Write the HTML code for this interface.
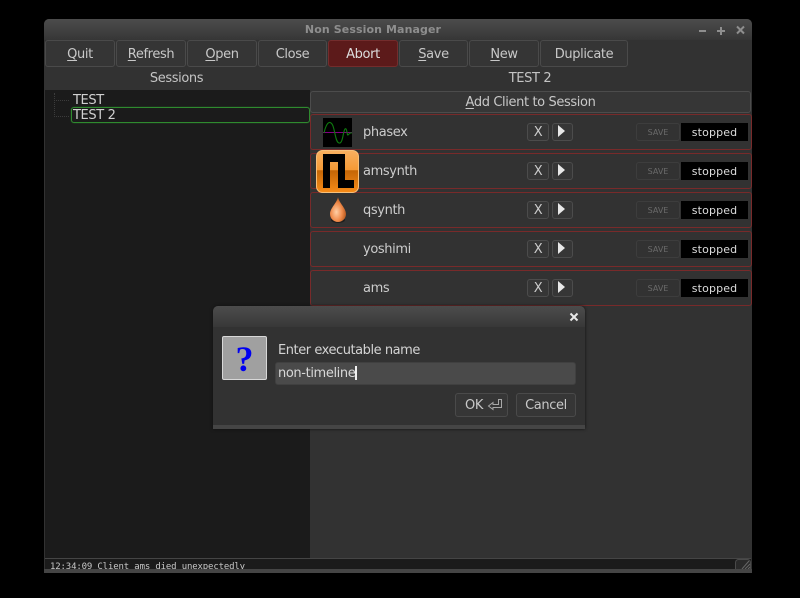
<!DOCTYPE html>
<html><head><meta charset="utf-8">
<style>
html,body{margin:0;padding:0;background:#000;width:800px;height:598px;overflow:hidden}
*{box-sizing:border-box}
body{font-family:"DejaVu Sans",sans-serif;font-size:13px;letter-spacing:-.38px;color:#ccc;position:relative}
.a{position:absolute}
.t{position:absolute;white-space:nowrap;line-height:16px;height:16px}
u{text-decoration:underline;text-underline-offset:2px}
#win{left:44px;top:19px;width:708px;height:554px;background:#323232;border-radius:5px 5px 0 0;overflow:hidden}
#title{left:0;top:0;width:708px;height:21px;background:linear-gradient(#4c4c4c,#363636)}
.btn{position:absolute;top:40px;height:27px;background:#353535;border:1px solid #4a4a4a;border-radius:3px;text-align:center;line-height:28px;color:#c8c8c8}
.row{position:absolute;left:310px;width:442px;height:36px;background:#323232;border:1px solid #782a2a;border-radius:3px}
.x{position:absolute;left:527px;width:22px;height:18px;border:1px solid #4c4c4c;border-radius:3px;text-align:center;line-height:18px;background:#363636;color:#ccc}
.p{position:absolute;left:552px;width:21px;height:18px;border:1px solid #4c4c4c;border-radius:3px;background:#363636}
.p:after{content:"";position:absolute;left:5px;top:1px;border-left:7px solid #e8e8e8;border-top:6px solid transparent;border-bottom:6px solid transparent}
.s{position:absolute;left:636px;width:44px;height:18px;border:1px solid #3d3d3d;border-radius:3px;text-align:center;line-height:17px;font-size:8px;letter-spacing:0;color:#6a6a6a;background:#323232}
.st{position:absolute;left:681px;width:67px;height:18px;background:#000;color:#ddd;text-align:center;line-height:19px;font-size:11px;letter-spacing:.15px}
.n{left:363px}
</style></head>
<body>
<div class="a" id="win">
<div class="a" id="title"></div>
</div>
<div class="t" style="left:44px;top:22px;width:658px;text-align:center;font-weight:bold;font-size:11px;color:#8e8e8e;letter-spacing:.1px">Non Session Manager</div>
<svg class="a" style="left:696px;top:24px" width="52" height="12" viewBox="0 0 52 12" fill="none" stroke="#8e8e8e" stroke-width="2"><path d="M3 7H10"/><path d="M21 7H29M25 3V11"/><path d="M41 2.500L48 9.500M48 2.500L41 9.500"/></svg>

<div class="btn" style="left:45px;width:70px"><u>Q</u>uit</div>
<div class="btn" style="left:116px;width:70px"><u>R</u>efresh</div>
<div class="btn" style="left:187px;width:70px"><u>O</u>pen</div>
<div class="btn" style="left:258px;width:69px">Close</div>
<div class="btn" style="left:328px;width:70px;background:#5c1a1a;border-color:#742c2c;color:#ddd">Abort</div>
<div class="btn" style="left:399px;width:69px"><u>S</u>ave</div>
<div class="btn" style="left:469px;width:70px"><u>N</u>ew</div>
<div class="btn" style="left:540px;width:88px">Duplicate</div>

<div class="t" style="left:44px;top:71px;width:265px;text-align:center;color:#c4c4c4">Sessions</div>
<div class="t" style="left:310px;top:71px;width:440px;text-align:center;color:#c4c4c4">TEST 2</div>

<div class="a" style="left:45px;top:90px;width:265px;height:468px;background:#1b1b1b"></div>
<div class="a" style="left:54px;top:93px;width:1px;height:24px;border-left:1px dotted #3c3c3c"></div>
<div class="a" style="left:54px;top:100px;width:15px;height:1px;border-top:1px dotted #3c3c3c"></div>
<div class="a" style="left:54px;top:116px;width:15px;height:1px;border-top:1px dotted #3c3c3c"></div>
<div class="t" style="left:73px;top:93px;color:#d0d0d0">TEST</div>
<div class="a" style="left:71px;top:107px;width:239px;height:16px;border:1px solid #2f8a2f;border-radius:3px;box-shadow:0 0 1px #2f8a2f"></div>
<div class="t" style="left:73px;top:108px;color:#d0d0d0">TEST 2</div>

<div class="a" style="left:310px;top:91px;width:441px;height:22px;background:#363636;border:1px solid #4c4c4c;border-radius:3px;text-align:center;line-height:21px;color:#c8c8c8"><u>A</u>dd Client to Session</div>

<div class="row" style="top:114px"></div>
<div class="row" style="top:153px"></div>
<div class="row" style="top:192px"></div>
<div class="row" style="top:231px"></div>
<div class="row" style="top:270px"></div>

<svg class="a" style="left:323px;top:118px" width="29" height="29" viewBox="0 0 29 29"><rect width="29" height="29" fill="#000"/><path d="M0 14.500H29" stroke="#800080" stroke-width="1"/><path d="M1 15C3 6 6 2 9 6S12 24 16 25S20 13 22 11S24 18 25 17S27 14 29 15" fill="none" stroke="#0f7a0f" stroke-width="1.100"/></svg>

<svg class="a" style="left:316px;top:150px" width="43" height="43" viewBox="0 0 43 43"><defs><linearGradient id="o" x1="0" y1="0" x2="0" y2="1"><stop offset="0" stop-color="#f8b060"/><stop offset=".46" stop-color="#f59a35"/><stop offset=".48" stop-color="#c46606"/><stop offset="1" stop-color="#f88c18"/></linearGradient></defs><rect x=".5" y=".5" width="42" height="42" rx="6" fill="url(#o)" stroke="#f7c07a"/><path d="M7 4H29V30H38V38H22V12H14V38H7Z" fill="#000"/></svg>

<svg class="a" style="left:328px;top:196px" width="20" height="28" viewBox="0 0 20 28"><defs><radialGradient id="d" cx=".4" cy=".6" r=".6"><stop offset="0" stop-color="#ffcfa6"/><stop offset=".6" stop-color="#ef8a4a"/><stop offset="1" stop-color="#b85a20"/></radialGradient></defs><ellipse cx="10" cy="24" rx="7" ry="3" fill="#1e1e1e"/><path d="M10 1C11 7 18 12 18 18A8 8 0 0 1 2 18C2 12 9 7 10 1Z" fill="url(#d)"/></svg>

<div class="t n" style="top:125px">phasex</div>
<div class="t n" style="top:164px">amsynth</div>
<div class="t n" style="top:203px">qsynth</div>
<div class="t n" style="top:242px">yoshimi</div>
<div class="t n" style="top:281px">ams</div>

<div class="x" style="top:123px">X</div><div class="p" style="top:123px"></div><div class="s" style="top:123px">SAVE</div><div class="st" style="top:123px">stopped</div>
<div class="x" style="top:162px">X</div><div class="p" style="top:162px"></div><div class="s" style="top:162px">SAVE</div><div class="st" style="top:162px">stopped</div>
<div class="x" style="top:201px">X</div><div class="p" style="top:201px"></div><div class="s" style="top:201px">SAVE</div><div class="st" style="top:201px">stopped</div>
<div class="x" style="top:240px">X</div><div class="p" style="top:240px"></div><div class="s" style="top:240px">SAVE</div><div class="st" style="top:240px">stopped</div>
<div class="x" style="top:279px">X</div><div class="p" style="top:279px"></div><div class="s" style="top:279px">SAVE</div><div class="st" style="top:279px">stopped</div>

<div class="a" style="left:45px;top:558px;width:706px;height:11px;background:#1b1b1b;border-top:1px solid #454545;overflow:hidden">
<div class="a" style="left:5px;top:1px;font:9px/14px 'DejaVu Sans Mono',monospace;color:#c8c8c8;white-space:nowrap;letter-spacing:-.15px">12:34:09 Client ams died unexpectedly</div>
</div>
<div class="a" style="left:44px;top:569px;width:708px;height:4px;background:#454545"></div>
<svg class="a" style="left:735px;top:559px" width="16" height="10" viewBox="0 0 16 10"><rect x=".5" y=".5" width="15" height="12" rx="3" fill="#2a2a2a" stroke="#4a4a4a"/><path d="M7 10L14 2M10 10L15 5M13 10L15 8" stroke="#666"/></svg>

<div class="a" style="left:213px;top:306px;width:372px;height:123px;background:#323232;border-radius:5px 5px 0 0;overflow:hidden;box-shadow:0 0 3px #111">
<div class="a" style="left:0;top:0;width:372px;height:21px;background:linear-gradient(#4c4c4c,#383838)"></div>
<div class="a" style="left:0;top:119px;width:372px;height:4px;background:#454545"></div>
</div>
<svg class="a" style="left:569px;top:312px" width="10" height="10" viewBox="0 0 10 10" fill="none" stroke="#e8e8e8" stroke-width="2"><path d="M1.500 1.500L8.500 8.500M8.500 1.500L1.500 8.500"/></svg>
<div class="a" style="left:222px;top:336px;width:45px;height:44px;background:#a0a0a0;border:1px solid #d8d8d8;border-radius:2px;text-align:center;font:bold 36px/44px 'Liberation Serif',serif;letter-spacing:0;color:#0000f0">?</div>
<div class="t" style="left:278px;top:343px;color:#d4d4d4;letter-spacing:-.45px">Enter executable name</div>
<div class="a" style="left:275px;top:362px;width:301px;height:23px;background:#4a4a4a;border-radius:3px;border:1px solid #404040"></div>
<div class="t" style="left:278px;top:366px;color:#d8d8d8">non-timeline</div>
<div class="a" style="left:355px;top:366px;width:2px;height:14px;background:#f0f0f0"></div>
<div class="a" style="left:455px;top:393px;width:53px;height:24px;background:#363636;border:1px solid #4a4a4a;border-radius:3px"></div>
<div class="t" style="left:465px;top:398px;color:#c8c8c8">OK</div>
<svg class="a" style="left:487px;top:398px" width="16" height="13" viewBox="0 0 16 13"><path d="M11.500 1.500H14.500V9.500H6V11.500L1.500 8L6 4.500V6.500H11.500Z" fill="none" stroke="#a8a8a8" stroke-width="1"/></svg>
<div class="a" style="left:516px;top:393px;width:60px;height:24px;background:#363636;border:1px solid #4a4a4a;border-radius:3px;text-align:center;line-height:23px;color:#c8c8c8">Cancel</div>
</body></html>
